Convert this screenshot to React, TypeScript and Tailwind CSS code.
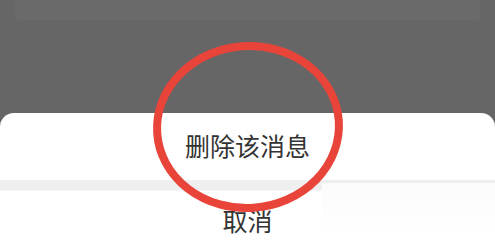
export default function App() {
  return (
    <div
      className="relative flex h-[234px] w-full flex-col overflow-hidden bg-[#666666]"
      style={{ fontFamily: '"Noto Sans", "Noto Sans CJK SC", sans-serif' }}
    >
      <div className="mx-[15px] h-[20px] rounded-b-[4px] bg-[#6a6a6a]" />
      <div className="flex-1" />

      <div className="flex h-[121px] flex-col rounded-t-[14px] bg-white">
        <div className="flex h-[68px] items-center justify-center">
          <span className="text-[25px] leading-[25px] text-[#333333]">删除该消息</span>
        </div>
        <div className="h-[10px] bg-[#efefef]" />
        <div className="flex justify-center border-t border-[#f7f7f7] pt-[18px]">
          <span className="text-[25px] leading-[25px] text-[#333333]">取消</span>
        </div>
      </div>

      {/* faded watermark patch, bottom right */}
      <div className="pointer-events-none absolute left-[322px] top-[183px] h-[51px] w-[173px] bg-gradient-to-b from-[#fbfbfb] to-white" />

      {/* red annotation ring */}
      <svg
        className="pointer-events-none absolute left-0 top-0"
        width="495"
        height="234"
        viewBox="0 0 495 234"
      >
        <ellipse
          cx="248"
          cy="127"
          rx="91"
          ry="81"
          fill="none"
          stroke="#e8443a"
          strokeWidth="8"
          transform="rotate(-4 248 127)"
        />
      </svg>
    </div>
  )
}
